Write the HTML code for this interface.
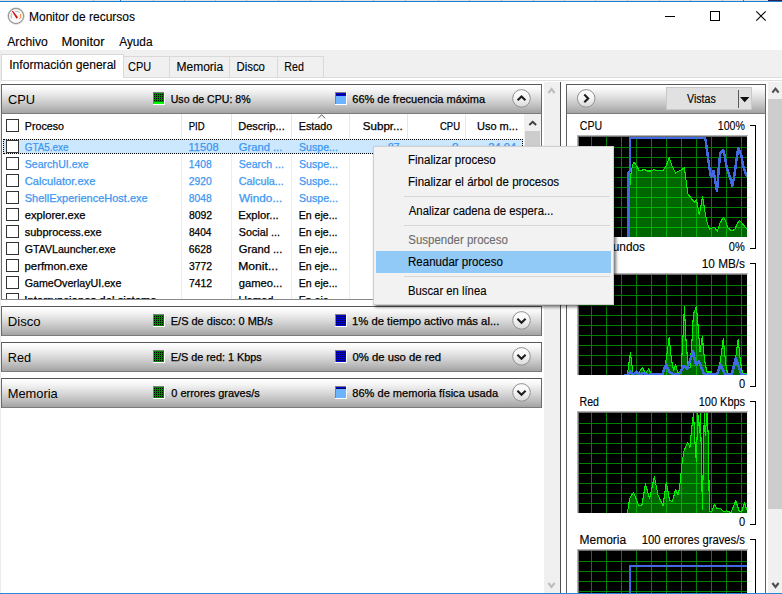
<!DOCTYPE html>
<html lang="es"><head><meta charset="utf-8"><title>Monitor de recursos</title>
<style>
html,body{margin:0;padding:0;background:#fff;}
body{width:782px;height:594px;position:relative;overflow:hidden;font-family:"Liberation Sans",sans-serif;font-size:12px;}
div,i,span,svg{position:absolute;display:block;box-sizing:border-box;}
.t{white-space:pre;line-height:16px;transform-origin:0 0;-webkit-text-stroke:0.25px currentColor;}
.sh{left:1px;width:541px;height:30px;border:1px solid #6a6a6a;border-top-color:#585858;border-bottom-color:#7b7b7b;background:linear-gradient(#ffffff 0%,#f9f9f9 14%,#ebebeb 30%,#d7d7d7 52%,#bcbcbc 78%,#a3a3a3 100%);}
.ck{left:6px;width:13px;height:13px;border:1px solid #333;background:#fff;}
.cl{top:138px;width:1px;height:161px;background:#e6eef8;}
.tab{top:56px;height:21px;border:1px solid #d9d9d9;border-bottom:none;background:#f0f0f0;}
.sep{left:404px;width:206px;height:1px;background:#d7d7d7;}
</style></head><body>
<svg style="left:0;top:0" width="0" height="0"><defs>
<pattern id="pg" width="2" height="2" patternUnits="userSpaceOnUse"><rect width="2" height="2" fill="#008400"/><rect x="1" y="0" width="1" height="1" fill="#000"/></pattern>
<pattern id="pb" width="2" height="2" patternUnits="userSpaceOnUse"><rect width="2" height="2" fill="#0000d8"/><rect x="1" y="0" width="1" height="1" fill="#000060"/></pattern>
</defs></svg>
<!-- window frame -->
<div style="left:0px;top:0px;width:782px;height:1px;background:#e2e2e2;"></div><div style="left:93px;top:0px;width:1px;height:1px;background:#bdbdbd;"></div><div style="left:153px;top:0px;width:1px;height:1px;background:#bdbdbd;"></div><div style="left:184px;top:0px;width:1px;height:1px;background:#bdbdbd;"></div><div style="left:215px;top:0px;width:1px;height:1px;background:#bdbdbd;"></div><div style="left:246px;top:0px;width:1px;height:1px;background:#bdbdbd;"></div><div style="left:278px;top:0px;width:1px;height:1px;background:#bdbdbd;"></div><div style="left:310px;top:0px;width:1px;height:1px;background:#bdbdbd;"></div><div style="left:342px;top:0px;width:1px;height:1px;background:#bdbdbd;"></div><div style="left:373px;top:0px;width:1px;height:1px;background:#bdbdbd;"></div><div style="left:405px;top:0px;width:1px;height:1px;background:#bdbdbd;"></div><div style="left:438px;top:0px;width:1px;height:1px;background:#bdbdbd;"></div><div style="left:469px;top:0px;width:1px;height:1px;background:#bdbdbd;"></div><div style="left:501px;top:0px;width:1px;height:1px;background:#bdbdbd;"></div><div style="left:533px;top:0px;width:1px;height:1px;background:#bdbdbd;"></div><div style="left:564px;top:0px;width:1px;height:1px;background:#bdbdbd;"></div><div style="left:595px;top:0px;width:1px;height:1px;background:#bdbdbd;"></div><div style="left:627px;top:0px;width:1px;height:1px;background:#bdbdbd;"></div><div style="left:659px;top:0px;width:1px;height:1px;background:#bdbdbd;"></div><div style="left:690px;top:0px;width:1px;height:1px;background:#bdbdbd;"></div><div style="left:722px;top:0px;width:1px;height:1px;background:#bdbdbd;"></div><div style="left:120px;top:0px;width:1px;height:1px;background:#1b7fd3;"></div><div style="left:743px;top:0px;width:1px;height:1px;background:#1b7fd3;"></div><div style="left:0px;top:1px;width:782px;height:1px;background:#1b7fd3;"></div><div style="left:768px;top:0px;width:14px;height:1px;background:#2a2350;"></div>
<!-- title icon -->
<svg style="left:7px;top:7px" width="18" height="18" viewBox="7 7 18 18"><circle cx="16" cy="16" r="7.7" fill="#fbfaf8" stroke="#8a8a8a" stroke-width="1.2"/><circle cx="16" cy="16" r="8.3" fill="none" stroke="#c9c9c9" stroke-width="0.6"/><path d="M11.4 18.4 Q10.6 15.6 11.6 13.4" fill="none" stroke="#8fa595" stroke-width="0.9"/><path d="M15.2 11.4 Q18.6 11 19.8 12.6" fill="none" stroke="#9aa89e" stroke-width="0.8"/><path d="M20.6 14 L20.6 17.6 Q20.4 18.6 19.2 18.7" fill="none" stroke="#f08326" stroke-width="1"/><path d="M11.9 11.2 L12.9 10.7 L18 17.2 L16.5 18.8 Z" fill="#d10f17"/></svg>
<!-- window buttons -->
<svg style="left:660px;top:6px" width="112" height="20" viewBox="660 6 112 20" shape-rendering="crispEdges"><rect x="665" y="16" width="10" height="1" fill="#000"/><rect x="710.5" y="11.5" width="9" height="9" fill="none" stroke="#000" stroke-width="1"/><path d="M756.3 11.3 L765.7 20.7 M765.7 11.3 L756.3 20.7" stroke="#000" stroke-width="1.1" shape-rendering="auto"/></svg>
<!-- tab strip -->
<div style="left:0px;top:50px;width:782px;height:27px;background:#f0f0f0;"></div>
<div style="left:0px;top:50px;width:1px;height:544px;background:#ececec;"></div><div style="left:1px;top:77px;width:781px;height:1px;background:#dcdcdc;"></div><div style="left:1px;top:80px;width:781px;height:1px;background:#dfdfdf;"></div><div style="left:1px;top:77px;width:1px;height:4px;background:#d9d9d9;"></div>
<div class="tab" style="left:123px;width:47px"></div>
<div class="tab" style="left:169px;width:61px"></div>
<div class="tab" style="left:229px;width:49px"></div>
<div class="tab" style="left:277px;width:47px"></div>
<div style="left:1px;top:54px;width:123px;height:24px;background:#fff;border:1px solid #d9d9d9;border-bottom:none"></div>
<!-- left pane scrollbar + splitter -->
<div style="left:544px;top:82px;width:16px;height:511px;background:#f0f0f0;"></div><div style="left:560px;top:82px;width:1px;height:511px;background:#4f4f4f;"></div>
<svg style="left:0;top:0" width="782" height="594" viewBox="0 0 782 594"><path d="M548.4 93.0 L551.5 89.0 L554.6 93.0" fill="none" stroke="#bdbdbd" stroke-width="2.1"/></svg><svg style="left:0;top:0" width="782" height="594" viewBox="0 0 782 594"><path d="M548.4 583.0 L551.5 587.0 L554.6 583.0" fill="none" stroke="#bdbdbd" stroke-width="2.1"/></svg>
<!-- table -->
<div style="left:1px;top:114px;width:541px;height:186px;border:1px solid #6e6e6e;border-top:none;border-bottom-color:#8a8a8a;background:#fff"></div>
<div style="left:0;top:0;width:523px;height:299px;overflow:hidden">
<i class="cl" style="left:181px;top:114px;height:24px;background:#e6e6e6"></i><i class="cl" style="left:231px;top:114px;height:24px;background:#e6e6e6"></i><i class="cl" style="left:291px;top:114px;height:24px;background:#e6e6e6"></i><i class="cl" style="left:349px;top:114px;height:24px;background:#e6e6e6"></i><i class="cl" style="left:407px;top:114px;height:24px;background:#e6e6e6"></i><i class="cl" style="left:465px;top:114px;height:24px;background:#e6e6e6"></i><i class="cl" style="left:181px"></i><i class="cl" style="left:231px"></i><i class="cl" style="left:291px"></i><i class="cl" style="left:349px"></i><i class="cl" style="left:407px"></i><i class="cl" style="left:465px"></i>
<div style="left:3px;top:139px;width:520px;height:15px;background:#cce8ff;border:1px dotted #000"></div>
<i class="ck" style="top:119px"></i><i class="ck" style="top:140px"></i><i class="ck" style="top:157px"></i><i class="ck" style="top:174px"></i><i class="ck" style="top:191px"></i><i class="ck" style="top:208px"></i><i class="ck" style="top:225px"></i><i class="ck" style="top:242px"></i><i class="ck" style="top:259px"></i><i class="ck" style="top:276px"></i><i class="ck" style="top:293px"></i>
<span class="t" style="left:24px;top:139px;font-size:10.5px;color:#3d97f2;transform:translateX(0.75px) scaleX(0.939)">GTA5.exe</span><span class="t" style="left:188px;top:139px;font-size:10.5px;color:#3d97f2;transform:translateX(0.5px) scaleX(1.058)">11508</span><span class="t" style="left:238px;top:139px;font-size:10.5px;color:#3d97f2;transform:translateX(0.75px) scaleX(1.067)">Grand ...</span><span class="t" style="left:299px;top:139px;font-size:10.5px;color:#3d97f2;transform:scaleX(1.010)">Suspe...</span><span class="t" style="left:24px;top:156px;font-size:10.5px;color:#3d97f2;transform:translateX(0.75px) scaleX(1.006)">SearchUI.exe</span><span class="t" style="left:188px;top:156px;font-size:10.5px;color:#3d97f2;transform:translateX(0.75px) scaleX(0.978)">1408</span><span class="t" style="left:238px;top:156px;font-size:10.5px;color:#3d97f2;transform:translateX(0.75px) scaleX(1.005)">Search ...</span><span class="t" style="left:299px;top:156px;font-size:10.5px;color:#3d97f2;transform:scaleX(1.010)">Suspe...</span><span class="t" style="left:24px;top:173px;font-size:10.5px;color:#3d97f2;transform:translateX(0.75px) scaleX(1.061)">Calculator.exe</span><span class="t" style="left:188px;top:173px;font-size:10.5px;color:#3d97f2;transform:translateX(0.75px) scaleX(0.983)">2920</span><span class="t" style="left:238px;top:173px;font-size:10.5px;color:#3d97f2;transform:translateX(0.75px) scaleX(1.031)">Calcula...</span><span class="t" style="left:299px;top:173px;font-size:10.5px;color:#3d97f2;transform:scaleX(1.010)">Suspe...</span><span class="t" style="left:24px;top:190px;font-size:10.5px;color:#3d97f2;transform:translateX(0.75px) scaleX(1.048)">ShellExperienceHost.exe</span><span class="t" style="left:188px;top:190px;font-size:10.5px;color:#3d97f2;transform:translateX(0.75px) scaleX(0.983)">8048</span><span class="t" style="left:239px;top:190px;font-size:10.5px;color:#3d97f2;transform:scaleX(1.122)">Windo...</span><span class="t" style="left:299px;top:190px;font-size:10.5px;color:#3d97f2;transform:scaleX(1.010)">Suspe...</span><span class="t" style="left:24px;top:207px;font-size:10.5px;color:#000;transform:translateX(0.75px) scaleX(1.061)">explorer.exe</span><span class="t" style="left:189px;top:207px;font-size:10.5px;color:#000;transform:scaleX(0.991)">8092</span><span class="t" style="left:238px;top:207px;font-size:10.5px;color:#000;transform:translateX(0.25px) scaleX(1.064)">Explor...</span><span class="t" style="left:298px;top:207px;font-size:10.5px;color:#000;transform:translateX(0.75px) scaleX(1.006)">En eje...</span><span class="t" style="left:24px;top:224px;font-size:10.5px;color:#000;transform:translateX(0.75px) scaleX(1.045)">subprocess.exe</span><span class="t" style="left:189px;top:224px;font-size:10.5px;color:#000;transform:scaleX(0.963)">8404</span><span class="t" style="left:238px;top:224px;font-size:10.5px;color:#000;transform:translateX(0.75px) scaleX(1.024)">Social ...</span><span class="t" style="left:298px;top:224px;font-size:10.5px;color:#000;transform:translateX(0.75px) scaleX(1.006)">En eje...</span><span class="t" style="left:24px;top:241px;font-size:10.5px;color:#000;transform:translateX(0.75px) scaleX(1.009)">GTAVLauncher.exe</span><span class="t" style="left:188px;top:241px;font-size:10.5px;color:#000;transform:translateX(0.75px) scaleX(0.984)">6628</span><span class="t" style="left:238px;top:241px;font-size:10.5px;color:#000;transform:translateX(0.75px) scaleX(1.067)">Grand ...</span><span class="t" style="left:298px;top:241px;font-size:10.5px;color:#000;transform:translateX(0.75px) scaleX(1.006)">En eje...</span><span class="t" style="left:24px;top:258px;font-size:10.5px;color:#000;transform:translateX(0.5px) scaleX(1.082)">perfmon.exe</span><span class="t" style="left:189px;top:258px;font-size:10.5px;color:#000;transform:scaleX(0.990)">3772</span><span class="t" style="left:238px;top:258px;font-size:10.5px;color:#000;transform:translateX(0.25px) scaleX(1.156)">Monit...</span><span class="t" style="left:298px;top:258px;font-size:10.5px;color:#000;transform:translateX(0.75px) scaleX(1.006)">En eje...</span><span class="t" style="left:24px;top:275px;font-size:10.5px;color:#000;transform:translateX(0.75px) scaleX(1.016)">GameOverlayUI.exe</span><span class="t" style="left:189px;top:275px;font-size:10.5px;color:#000;transform:scaleX(0.990)">7412</span><span class="t" style="left:238px;top:275px;font-size:10.5px;color:#000;transform:translateX(0.75px) scaleX(1.067)">gameo...</span><span class="t" style="left:298px;top:275px;font-size:10.5px;color:#000;transform:translateX(0.75px) scaleX(1.006)">En eje...</span><span class="t" style="left:24px;top:292px;font-size:10.5px;color:#000;transform:translateX(0.25px) scaleX(1.081)">Interrupciones del sistema</span><span class="t" style="left:238px;top:292px;font-size:10.5px;color:#000;transform:translateX(0.5px) scaleX(1.011)">Llamad...</span><span class="t" style="left:298px;top:292px;font-size:10.5px;color:#000;transform:translateX(0.75px) scaleX(1.006)">En eje...</span><span class="t" style="left:388px;top:139px;font-size:10.5px;color:#3d97f2;transform:scaleX(0.982)">87</span><span class="t" style="left:452px;top:139px;font-size:10.5px;color:#3d97f2;transform:scaleX(1.112)">0</span><span class="t" style="left:488px;top:139px;font-size:10.5px;color:#3d97f2;transform:translateX(0.25px) scaleX(1.064)">24.04</span>
</div>
<div style="left:524px;top:114px;width:17px;height:185px;background:#f0f0f0;"></div><div style="left:525px;top:131px;width:15px;height:150px;background:#cdcdcd;"></div>
<svg style="left:0;top:0" width="782" height="594" viewBox="0 0 782 594"><path d="M529.3 125.0 L532.7 121.7 L536.1 125.0" fill="none" stroke="#404040" stroke-width="1.9"/></svg>
<svg style="left:316px;top:113px" width="12" height="7" viewBox="316 113 12 7"><path d="M318.2 118.3 L321.6 114.7 L325 118.3" fill="none" stroke="#4a4a4a" stroke-width="0.9"/></svg>
<!-- sections -->
<div class="sh" style="top:84px"></div><svg style="left:153px;top:92px" width="12" height="13" viewBox="0 0 12 13" shape-rendering="crispEdges"><rect x="0" y="0" width="12" height="13" fill="#fff"/><rect x="0" y="0" width="11" height="1" fill="#808080"/><rect x="0" y="0" width="1" height="12" fill="#808080"/><rect x="1" y="1" width="10" height="11" fill="url(#pg)"/><rect x="1" y="10" width="10" height="2" fill="#00ff00"/></svg><svg style="left:335px;top:92px" width="12" height="13" viewBox="0 0 12 13" shape-rendering="crispEdges"><rect x="0" y="0" width="12" height="13" fill="#fff"/><rect x="0" y="0" width="11" height="1" fill="#808080"/><rect x="0" y="0" width="1" height="12" fill="#808080"/><rect x="1" y="1" width="10" height="11" fill="#6cb4ff"/><rect x="1" y="1" width="10" height="3" fill="url(#pb)"/></svg><svg style="left:511px;top:88px" width="21" height="21" viewBox="0 0 21 21"><defs><linearGradient id="cg84" x1="0" y1="0" x2="0" y2="1"><stop offset="0" stop-color="#ffffff"/><stop offset="0.5" stop-color="#f4f4f4"/><stop offset="1" stop-color="#d8d8d8"/></linearGradient></defs><g transform="translate(10.50 10.40)"><circle cx="0" cy="0" r="8.8" fill="url(#cg84)" stroke="#909090" stroke-width="1"/><path d="M-3.9 1.9 L0 -2 L3.9 1.9" fill="none" stroke="#1e1e1e" stroke-width="2.1"/></g></svg>
<div class="sh" style="top:306px"></div><svg style="left:153px;top:314px" width="12" height="13" viewBox="0 0 12 13" shape-rendering="crispEdges"><rect x="0" y="0" width="12" height="13" fill="#fff"/><rect x="0" y="0" width="11" height="1" fill="#808080"/><rect x="0" y="0" width="1" height="12" fill="#808080"/><rect x="1" y="1" width="10" height="11" fill="url(#pg)"/></svg><svg style="left:335px;top:314px" width="12" height="13" viewBox="0 0 12 13" shape-rendering="crispEdges"><rect x="0" y="0" width="12" height="13" fill="#fff"/><rect x="0" y="0" width="11" height="1" fill="#808080"/><rect x="0" y="0" width="1" height="12" fill="#808080"/><rect x="1" y="1" width="10" height="11" fill="#6cb4ff"/><rect x="1" y="1" width="10" height="11" fill="url(#pb)"/></svg><svg style="left:511px;top:310px" width="21" height="21" viewBox="0 0 21 21"><defs><linearGradient id="cg306" x1="0" y1="0" x2="0" y2="1"><stop offset="0" stop-color="#ffffff"/><stop offset="0.5" stop-color="#f4f4f4"/><stop offset="1" stop-color="#d8d8d8"/></linearGradient></defs><g transform="translate(10.50 10.40)"><circle cx="0" cy="0" r="8.8" fill="url(#cg306)" stroke="#909090" stroke-width="1"/><path d="M-4.1 -1.7 L0 2.3 L4.1 -1.7" fill="none" stroke="#1e1e1e" stroke-width="2.1"/></g></svg>
<div class="sh" style="top:342px"></div><svg style="left:153px;top:350px" width="12" height="13" viewBox="0 0 12 13" shape-rendering="crispEdges"><rect x="0" y="0" width="12" height="13" fill="#fff"/><rect x="0" y="0" width="11" height="1" fill="#808080"/><rect x="0" y="0" width="1" height="12" fill="#808080"/><rect x="1" y="1" width="10" height="11" fill="url(#pg)"/></svg><svg style="left:335px;top:350px" width="12" height="13" viewBox="0 0 12 13" shape-rendering="crispEdges"><rect x="0" y="0" width="12" height="13" fill="#fff"/><rect x="0" y="0" width="11" height="1" fill="#808080"/><rect x="0" y="0" width="1" height="12" fill="#808080"/><rect x="1" y="1" width="10" height="11" fill="#6cb4ff"/><rect x="1" y="1" width="10" height="11" fill="url(#pb)"/></svg><svg style="left:511px;top:346px" width="21" height="21" viewBox="0 0 21 21"><defs><linearGradient id="cg342" x1="0" y1="0" x2="0" y2="1"><stop offset="0" stop-color="#ffffff"/><stop offset="0.5" stop-color="#f4f4f4"/><stop offset="1" stop-color="#d8d8d8"/></linearGradient></defs><g transform="translate(10.50 10.40)"><circle cx="0" cy="0" r="8.8" fill="url(#cg342)" stroke="#909090" stroke-width="1"/><path d="M-4.1 -1.7 L0 2.3 L4.1 -1.7" fill="none" stroke="#1e1e1e" stroke-width="2.1"/></g></svg>
<div class="sh" style="top:378px"></div><svg style="left:153px;top:386px" width="12" height="13" viewBox="0 0 12 13" shape-rendering="crispEdges"><rect x="0" y="0" width="12" height="13" fill="#fff"/><rect x="0" y="0" width="11" height="1" fill="#808080"/><rect x="0" y="0" width="1" height="12" fill="#808080"/><rect x="1" y="1" width="10" height="11" fill="url(#pg)"/></svg><svg style="left:335px;top:386px" width="12" height="13" viewBox="0 0 12 13" shape-rendering="crispEdges"><rect x="0" y="0" width="12" height="13" fill="#fff"/><rect x="0" y="0" width="11" height="1" fill="#808080"/><rect x="0" y="0" width="1" height="12" fill="#808080"/><rect x="1" y="1" width="10" height="11" fill="#6cb4ff"/><rect x="1" y="1" width="10" height="2" fill="url(#pb)"/></svg><svg style="left:511px;top:382px" width="21" height="21" viewBox="0 0 21 21"><defs><linearGradient id="cg378" x1="0" y1="0" x2="0" y2="1"><stop offset="0" stop-color="#ffffff"/><stop offset="0.5" stop-color="#f4f4f4"/><stop offset="1" stop-color="#d8d8d8"/></linearGradient></defs><g transform="translate(10.50 10.40)"><circle cx="0" cy="0" r="8.8" fill="url(#cg378)" stroke="#909090" stroke-width="1"/><path d="M-4.1 -1.7 L0 2.3 L4.1 -1.7" fill="none" stroke="#1e1e1e" stroke-width="2.1"/></g></svg>
<!-- right panel -->
<div style="left:566px;top:84px;width:200px;height:520px;border:1px solid #5f5f5f;background:#fff"></div>
<div style="left:566px;top:84px;width:200px;height:30px;border:1px solid #5f5f5f;border-top-color:#585858;border-bottom-color:#7b7b7b;background:linear-gradient(#ffffff 0%,#f9f9f9 14%,#ebebeb 30%,#d7d7d7 52%,#bcbcbc 78%,#a3a3a3 100%)"></div>
<svg style="left:576px;top:88px" width="21" height="21" viewBox="0 0 21 21"><defs><linearGradient id="cgr" x1="0" y1="0" x2="0" y2="1"><stop offset="0" stop-color="#ffffff"/><stop offset="0.5" stop-color="#f4f4f4"/><stop offset="1" stop-color="#d8d8d8"/></linearGradient></defs><g transform="translate(10.20 10.40)"><circle cx="0" cy="0" r="8.8" fill="url(#cgr)" stroke="#909090" stroke-width="1"/><path d="M-1.9 -3.9 L2 0 L-1.9 3.9" fill="none" stroke="#1e1e1e" stroke-width="2.1"/></g></svg>
<div style="left:666px;top:87px;width:86px;height:23px;background:#e1e1e1;border:1px solid #c9c9c9"></div>
<div style="left:738px;top:90px;width:1px;height:18px;background:#5a5a5a;"></div>
<svg style="left:739px;top:96px" width="12" height="8" viewBox="739 96 12 8"><path d="M740 97 L749.4 97 L744.7 102.2 Z" fill="#111"/></svg>
<!-- right scrollbar -->
<div style="left:768px;top:82px;width:14px;height:511px;background:#f0f0f0;"></div><div style="left:768px;top:99px;width:14px;height:410px;background:#cdcdcd;"></div>
<svg style="left:0;top:0" width="782" height="594" viewBox="0 0 782 594"><path d="M772.4 92.7 L775.5 88.7 L778.6 92.7" fill="none" stroke="#505050" stroke-width="2.1"/></svg><svg style="left:0;top:0" width="782" height="594" viewBox="0 0 782 594"><path d="M772.4 583.0 L775.5 587.0 L778.6 583.0" fill="none" stroke="#505050" stroke-width="2.1"/></svg>
<svg class="gsvg" width="782" height="594" viewBox="0 0 782 594"><defs><clipPath id="c0"><rect x="579" y="137" width="168" height="100"/></clipPath><clipPath id="c1"><rect x="579" y="275" width="168" height="100"/></clipPath><clipPath id="c2"><rect x="579" y="413" width="168" height="100"/></clipPath><clipPath id="c3"><rect x="579" y="551" width="168" height="42"/></clipPath></defs><rect x="577" y="135" width="170" height="102" fill="#000"/><rect x="577" y="135" width="171" height="1" fill="#b4b4b4"/><rect x="577" y="136" width="170" height="1" fill="#6e6e6e"/><rect x="577" y="135" width="1" height="102" fill="#b4b4b4"/><rect x="578" y="136" width="1" height="101" fill="#6e6e6e"/><rect x="747" y="136" width="1" height="101" fill="#f4f4f4"/><g clip-path="url(#c0)"><g shape-rendering="crispEdges"><rect x="591" y="137" width="1" height="100" fill="#008000"/><rect x="606" y="137" width="1" height="100" fill="#008000"/><rect x="621" y="137" width="1" height="100" fill="#008000"/><rect x="636" y="137" width="1" height="100" fill="#008000"/><rect x="651" y="137" width="1" height="100" fill="#008000"/><rect x="666" y="137" width="1" height="100" fill="#008000"/><rect x="681" y="137" width="1" height="100" fill="#008000"/><rect x="696" y="137" width="1" height="100" fill="#008000"/><rect x="711" y="137" width="1" height="100" fill="#008000"/><rect x="726" y="137" width="1" height="100" fill="#008000"/><rect x="741" y="137" width="1" height="100" fill="#008000"/><rect x="579" y="147" width="168" height="1" fill="#008000"/><rect x="579" y="157" width="168" height="1" fill="#008000"/><rect x="579" y="167" width="168" height="1" fill="#008000"/><rect x="579" y="177" width="168" height="1" fill="#008000"/><rect x="579" y="187" width="168" height="1" fill="#008000"/><rect x="579" y="197" width="168" height="1" fill="#008000"/><rect x="579" y="207" width="168" height="1" fill="#008000"/><rect x="579" y="217" width="168" height="1" fill="#008000"/><rect x="579" y="227" width="168" height="1" fill="#008000"/></g><polygon points="629.5,238 629.5,237.0 630.0,181.0 631.5,170.0 633.5,162.2 635.5,164.0 637.0,166.5 639.0,170.5 641.0,170.3 644.5,169.5 647.0,171.0 651.0,171.0 654.0,169.5 657.0,171.0 660.0,170.5 663.0,170.5 666.0,166.0 669.3,157.8 672.0,166.0 675.5,173.0 679.0,171.0 682.0,169.5 684.4,167.5 686.0,180.0 688.0,194.0 691.0,198.0 694.3,202.5 696.5,200.0 699.3,215.0 702.6,196.4 705.0,212.0 707.0,222.0 709.5,229.0 712.0,228.0 714.0,227.0 717.4,231.0 720.0,223.0 723.5,217.2 726.0,222.0 728.0,228.0 732.0,231.0 735.0,229.0 737.0,224.0 739.4,220.5 742.0,223.0 745.0,227.0 747.0,229.0 747.0,238" fill="#00ff00" fill-opacity="0.4"/><polyline points="629.5,237.0 630.0,181.0 631.5,170.0 633.5,162.2 635.5,164.0 637.0,166.5 639.0,170.5 641.0,170.3 644.5,169.5 647.0,171.0 651.0,171.0 654.0,169.5 657.0,171.0 660.0,170.5 663.0,170.5 666.0,166.0 669.3,157.8 672.0,166.0 675.5,173.0 679.0,171.0 682.0,169.5 684.4,167.5 686.0,180.0 688.0,194.0 691.0,198.0 694.3,202.5 696.5,200.0 699.3,215.0 702.6,196.4 705.0,212.0 707.0,222.0 709.5,229.0 712.0,228.0 714.0,227.0 717.4,231.0 720.0,223.0 723.5,217.2 726.0,222.0 728.0,228.0 732.0,231.0 735.0,229.0 737.0,224.0 739.4,220.5 742.0,223.0 745.0,227.0 747.0,229.0" fill="none" stroke="#00f000" stroke-width="1.1" stroke-linejoin="round" shape-rendering="crispEdges"/><polyline points="628.5,237.5 628.5,173.0 630.0,171.0 630.0,138.0 704.5,138.0 705.6,140.0 707.2,152.0 709.0,165.0 711.0,177.0 713.6,171.0 717.0,191.0 719.0,165.0 720.3,153.5 723.3,150.0 725.0,157.0 727.0,169.0 730.0,177.0 732.2,186.0 734.0,178.0 736.0,163.0 738.3,148.0 741.5,156.0 743.0,165.0 745.0,172.0 747.0,176.5" fill="none" stroke="#4169e1" stroke-width="2.5" stroke-linejoin="round" shape-rendering="crispEdges"/></g><rect x="577" y="273" width="170" height="102" fill="#000"/><rect x="577" y="273" width="171" height="1" fill="#b4b4b4"/><rect x="577" y="274" width="170" height="1" fill="#6e6e6e"/><rect x="577" y="273" width="1" height="102" fill="#b4b4b4"/><rect x="578" y="274" width="1" height="101" fill="#6e6e6e"/><rect x="747" y="274" width="1" height="101" fill="#f4f4f4"/><g clip-path="url(#c1)"><g shape-rendering="crispEdges"><rect x="591" y="275" width="1" height="100" fill="#008000"/><rect x="606" y="275" width="1" height="100" fill="#008000"/><rect x="621" y="275" width="1" height="100" fill="#008000"/><rect x="636" y="275" width="1" height="100" fill="#008000"/><rect x="651" y="275" width="1" height="100" fill="#008000"/><rect x="666" y="275" width="1" height="100" fill="#008000"/><rect x="681" y="275" width="1" height="100" fill="#008000"/><rect x="696" y="275" width="1" height="100" fill="#008000"/><rect x="711" y="275" width="1" height="100" fill="#008000"/><rect x="726" y="275" width="1" height="100" fill="#008000"/><rect x="741" y="275" width="1" height="100" fill="#008000"/><rect x="579" y="285" width="168" height="1" fill="#008000"/><rect x="579" y="295" width="168" height="1" fill="#008000"/><rect x="579" y="305" width="168" height="1" fill="#008000"/><rect x="579" y="315" width="168" height="1" fill="#008000"/><rect x="579" y="325" width="168" height="1" fill="#008000"/><rect x="579" y="335" width="168" height="1" fill="#008000"/><rect x="579" y="345" width="168" height="1" fill="#008000"/><rect x="579" y="355" width="168" height="1" fill="#008000"/><rect x="579" y="365" width="168" height="1" fill="#008000"/></g><polygon points="624.0,376 624.0,375.0 627.5,374.0 630.4,352.5 633.0,373.0 638.0,374.0 642.4,367.6 645.5,373.0 648.6,369.0 651.5,374.0 660.0,374.5 664.0,372.0 666.5,357.0 669.2,337.5 671.5,360.0 673.7,371.0 675.5,365.0 678.0,373.0 681.0,371.0 682.8,340.0 684.4,307.0 686.0,340.0 688.0,366.0 690.0,368.0 692.0,340.0 693.4,314.0 696.4,306.5 698.0,325.0 700.0,352.0 702.3,336.3 704.5,360.0 707.0,372.0 711.3,372.0 713.5,374.5 717.6,374.0 720.5,360.0 723.3,338.4 725.5,362.0 727.4,373.0 732.0,373.5 735.0,362.0 738.2,339.5 740.5,362.0 742.6,373.5 744.4,374.0 747.0,374.0 747.0,376" fill="#00ff00" fill-opacity="0.4"/><polyline points="624.0,375.0 627.5,374.0 630.4,352.5 633.0,373.0 638.0,374.0 642.4,367.6 645.5,373.0 648.6,369.0 651.5,374.0 660.0,374.5 664.0,372.0 666.5,357.0 669.2,337.5 671.5,360.0 673.7,371.0 675.5,365.0 678.0,373.0 681.0,371.0 682.8,340.0 684.4,307.0 686.0,340.0 688.0,366.0 690.0,368.0 692.0,340.0 693.4,314.0 696.4,306.5 698.0,325.0 700.0,352.0 702.3,336.3 704.5,360.0 707.0,372.0 711.3,372.0 713.5,374.5 717.6,374.0 720.5,360.0 723.3,338.4 725.5,362.0 727.4,373.0 732.0,373.5 735.0,362.0 738.2,339.5 740.5,362.0 742.6,373.5 744.4,374.0 747.0,374.0" fill="none" stroke="#00f000" stroke-width="1.1" stroke-linejoin="round" shape-rendering="crispEdges"/><polyline points="624.0,375.4 628.0,374.9 630.4,371.2 633.0,374.9 636.5,371.7 639.0,374.9 644.0,372.9 648.0,374.9 656.7,374.2 662.0,374.9 666.2,363.9 669.0,371.9 673.7,374.2 679.0,374.4 683.5,365.9 687.0,368.9 690.5,358.9 693.0,351.1 696.0,364.9 698.8,361.3 701.5,367.9 704.0,373.9 716.7,374.9 720.6,364.6 724.7,373.9 732.0,373.9 735.8,358.3 738.0,364.9 740.0,370.3 741.7,374.9 747.0,375.2" fill="none" stroke="#4169e1" stroke-width="2.6" stroke-linejoin="round" shape-rendering="crispEdges"/></g><rect x="577" y="411" width="170" height="102" fill="#000"/><rect x="577" y="411" width="171" height="1" fill="#b4b4b4"/><rect x="577" y="412" width="170" height="1" fill="#6e6e6e"/><rect x="577" y="411" width="1" height="102" fill="#b4b4b4"/><rect x="578" y="412" width="1" height="101" fill="#6e6e6e"/><rect x="747" y="412" width="1" height="101" fill="#f4f4f4"/><g clip-path="url(#c2)"><g shape-rendering="crispEdges"><rect x="591" y="413" width="1" height="100" fill="#008000"/><rect x="606" y="413" width="1" height="100" fill="#008000"/><rect x="621" y="413" width="1" height="100" fill="#008000"/><rect x="636" y="413" width="1" height="100" fill="#008000"/><rect x="651" y="413" width="1" height="100" fill="#008000"/><rect x="666" y="413" width="1" height="100" fill="#008000"/><rect x="681" y="413" width="1" height="100" fill="#008000"/><rect x="696" y="413" width="1" height="100" fill="#008000"/><rect x="711" y="413" width="1" height="100" fill="#008000"/><rect x="726" y="413" width="1" height="100" fill="#008000"/><rect x="741" y="413" width="1" height="100" fill="#008000"/><rect x="579" y="423" width="168" height="1" fill="#008000"/><rect x="579" y="433" width="168" height="1" fill="#008000"/><rect x="579" y="443" width="168" height="1" fill="#008000"/><rect x="579" y="453" width="168" height="1" fill="#008000"/><rect x="579" y="463" width="168" height="1" fill="#008000"/><rect x="579" y="473" width="168" height="1" fill="#008000"/><rect x="579" y="483" width="168" height="1" fill="#008000"/><rect x="579" y="493" width="168" height="1" fill="#008000"/><rect x="579" y="503" width="168" height="1" fill="#008000"/></g><polygon points="627.4,514 627.4,513.0 629.6,498.7 633.3,492.3 635.7,497.8 638.5,505.2 641.9,505.2 645.4,483.9 649.6,498.7 654.3,476.5 658.0,495.0 663.0,505.8 666.3,482.0 669.6,500.6 672.4,501.5 675.6,489.5 678.3,495.0 680.2,482.0 682.0,463.6 683.9,451.5 687.6,442.3 690.0,447.3 691.3,432.0 693.5,413.0 695.0,443.0 696.3,461.7 697.8,413.0 699.6,432.0 700.5,413.0 702.4,509.0 704.3,413.0 705.2,435.8 707.0,413.0 708.5,439.5 709.3,511.7 711.7,511.7 714.4,504.3 717.2,509.0 720.0,508.0 723.7,511.7 726.5,510.8 731.0,512.6 735.7,500.6 739.4,511.7 742.2,510.8 744.4,502.4 746.9,510.0 746.9,514" fill="#00ff00" fill-opacity="0.4"/><polyline points="627.4,513.0 629.6,498.7 633.3,492.3 635.7,497.8 638.5,505.2 641.9,505.2 645.4,483.9 649.6,498.7 654.3,476.5 658.0,495.0 663.0,505.8 666.3,482.0 669.6,500.6 672.4,501.5 675.6,489.5 678.3,495.0 680.2,482.0 682.0,463.6 683.9,451.5 687.6,442.3 690.0,447.3 691.3,432.0 693.5,413.0 695.0,443.0 696.3,461.7 697.8,413.0 699.6,432.0 700.5,413.0 702.4,509.0 704.3,413.0 705.2,435.8 707.0,413.0 708.5,439.5 709.3,511.7 711.7,511.7 714.4,504.3 717.2,509.0 720.0,508.0 723.7,511.7 726.5,510.8 731.0,512.6 735.7,500.6 739.4,511.7 742.2,510.8 744.4,502.4 746.9,510.0" fill="none" stroke="#00f000" stroke-width="1.1" stroke-linejoin="round" shape-rendering="crispEdges"/></g><rect x="577" y="549" width="170" height="44" fill="#000"/><rect x="577" y="549" width="171" height="1" fill="#b4b4b4"/><rect x="577" y="550" width="170" height="1" fill="#6e6e6e"/><rect x="577" y="549" width="1" height="44" fill="#b4b4b4"/><rect x="578" y="550" width="1" height="43" fill="#6e6e6e"/><rect x="747" y="550" width="1" height="43" fill="#f4f4f4"/><g clip-path="url(#c3)"><g shape-rendering="crispEdges"><rect x="591" y="551" width="1" height="42" fill="#008000"/><rect x="606" y="551" width="1" height="42" fill="#008000"/><rect x="621" y="551" width="1" height="42" fill="#008000"/><rect x="636" y="551" width="1" height="42" fill="#008000"/><rect x="651" y="551" width="1" height="42" fill="#008000"/><rect x="666" y="551" width="1" height="42" fill="#008000"/><rect x="681" y="551" width="1" height="42" fill="#008000"/><rect x="696" y="551" width="1" height="42" fill="#008000"/><rect x="711" y="551" width="1" height="42" fill="#008000"/><rect x="726" y="551" width="1" height="42" fill="#008000"/><rect x="741" y="551" width="1" height="42" fill="#008000"/><rect x="579" y="561" width="168" height="1" fill="#008000"/><rect x="579" y="571" width="168" height="1" fill="#008000"/><rect x="579" y="581" width="168" height="1" fill="#008000"/><rect x="579" y="591" width="168" height="1" fill="#008000"/></g><polyline points="630.0,600.0 630.0,566.0 747.0,566.0" fill="none" stroke="#4169e1" stroke-width="2" stroke-linejoin="round" shape-rendering="crispEdges"/></g><g shape-rendering="crispEdges" fill="#000"><rect x="750" y="125" width="6" height="1"/><rect x="755" y="125" width="1" height="124"/><rect x="750" y="248" width="6" height="1"/></g><g shape-rendering="crispEdges" fill="#000"><rect x="750" y="263" width="6" height="1"/><rect x="755" y="263" width="1" height="124"/><rect x="750" y="386" width="6" height="1"/></g><g shape-rendering="crispEdges" fill="#000"><rect x="750" y="401" width="6" height="1"/><rect x="755" y="401" width="1" height="124"/><rect x="750" y="524" width="6" height="1"/></g><g shape-rendering="crispEdges" fill="#000"><rect x="750" y="539" width="6" height="1"/><rect x="755" y="539" width="1" height="62"/><rect x="750" y="600" width="6" height="1"/></g></svg>
<span class="t" style="left:29px;top:9px;font-size:12px;color:#000;-webkit-text-stroke-width:0.12px">Monitor de recursos</span><span class="t" style="left:7px;top:34px;font-size:12px;color:#000;-webkit-text-stroke-width:0.12px;transform:translateX(0.25px) scaleX(1.014)">Archivo</span><span class="t" style="left:61px;top:34px;font-size:12px;color:#000;-webkit-text-stroke-width:0.12px;transform:translateX(0.5px) scaleX(1.076)">Monitor</span><span class="t" style="left:119px;top:34px;font-size:12px;color:#000;-webkit-text-stroke-width:0.12px;transform:translateX(0.25px) scaleX(0.983)">Ayuda</span><span class="t" style="left:9px;top:57px;font-size:12px;color:#000;-webkit-text-stroke-width:0.12px;transform:translateX(0.25px) scaleX(1.007)">Información general</span><span class="t" style="left:128px;top:59px;font-size:12px;color:#000;-webkit-text-stroke-width:0.12px;transform:scaleX(0.912)">CPU</span><span class="t" style="left:176px;top:59px;font-size:12px;color:#000;-webkit-text-stroke-width:0.12px;transform:translateX(0.5px)">Memoria</span><span class="t" style="left:236px;top:59px;font-size:12px;color:#000;-webkit-text-stroke-width:0.12px;transform:translateX(0.5px) scaleX(0.948)">Disco</span><span class="t" style="left:284px;top:59px;font-size:12px;color:#000;-webkit-text-stroke-width:0.12px;transform:translateX(0.25px) scaleX(0.889)">Red</span><span class="t" style="left:8px;top:92px;font-size:13.4px;color:#000;-webkit-text-stroke:0;transform:scaleX(0.958)">CPU</span><span class="t" style="left:7px;top:314px;font-size:13.4px;color:#000;-webkit-text-stroke:0;transform:translateX(0.75px) scaleX(0.982)">Disco</span><span class="t" style="left:7px;top:350px;font-size:13.4px;color:#000;-webkit-text-stroke:0;transform:translateX(0.75px) scaleX(0.945)">Red</span><span class="t" style="left:7px;top:386px;font-size:13.4px;color:#000;-webkit-text-stroke:0;transform:translateX(0.75px) scaleX(0.960)">Memoria</span><span class="t" style="left:170px;top:91px;font-size:10.5px;color:#000;transform:translateX(0.75px) scaleX(1.005)">Uso de CPU: 8%</span><span class="t" style="left:352px;top:91px;font-size:10.5px;color:#000;transform:translateX(0.25px) scaleX(1.049)">66% de frecuencia máxima</span><span class="t" style="left:170px;top:313px;font-size:10.5px;color:#000;transform:translateX(0.75px) scaleX(1.046)">E/S de disco: 0 MB/s</span><span class="t" style="left:352px;top:313px;font-size:10.5px;color:#000;transform:scaleX(1.074)">1% de tiempo activo más al...</span><span class="t" style="left:170px;top:349px;font-size:10.5px;color:#000;transform:translateX(0.75px) scaleX(1.031)">E/S de red: 1 Kbps</span><span class="t" style="left:352px;top:349px;font-size:10.5px;color:#000;transform:translateX(0.5px) scaleX(1.076)">0% de uso de red</span><span class="t" style="left:171px;top:385px;font-size:10.5px;color:#000;transform:translateX(0.25px) scaleX(1.045)">0 errores graves/s</span><span class="t" style="left:352px;top:385px;font-size:10.5px;color:#000;transform:translateX(0.25px) scaleX(1.054)">86% de memoria física usada</span><span class="t" style="left:24px;top:118px;font-size:11px;color:#000;transform:translateX(0.75px) scaleX(0.972)">Proceso</span><span class="t" style="left:188px;top:118px;font-size:11px;color:#000;transform:translateX(0.75px) scaleX(0.867)">PID</span><span class="t" style="left:238px;top:118px;font-size:11px;color:#000;transform:translateX(0.25px)">Descrip...</span><span class="t" style="left:298px;top:118px;font-size:11px;color:#000;transform:translateX(0.75px) scaleX(0.981)">Estado</span><span class="t" style="left:362px;top:118px;font-size:11px;color:#000;transform:translateX(0.75px) scaleX(1.055)">Subpr...</span><span class="t" style="left:440px;top:118px;font-size:11px;color:#000;transform:scaleX(0.861)">CPU</span><span class="t" style="left:477px;top:118px;font-size:11px;color:#000">Uso m...</span><span class="t" style="left:687px;top:91px;font-size:12px;color:#000;-webkit-text-stroke-width:0.12px;transform:scaleX(0.884)">Vistas</span><span class="t" style="left:579px;top:118px;font-size:12px;color:#000;-webkit-text-stroke-width:0.12px;transform:translateX(0.75px) scaleX(0.883)">CPU</span><span class="t" style="left:717px;top:118px;font-size:12px;color:#000;-webkit-text-stroke-width:0.12px;transform:translateX(0.75px) scaleX(0.881)">100%</span><span class="t" style="left:577px;top:239px;font-size:12px;color:#000;-webkit-text-stroke-width:0.12px;transform:translateX(0.25px) scaleX(0.985)">60 segundos</span><span class="t" style="left:728px;top:239px;font-size:12px;color:#000;-webkit-text-stroke-width:0.12px;transform:translateX(0.75px) scaleX(0.920)">0%</span><span class="t" style="left:701px;top:256px;font-size:12px;color:#000;-webkit-text-stroke-width:0.12px;transform:translateX(0.75px) scaleX(0.982)">10 MB/s</span><span class="t" style="left:739px;top:376px;font-size:12px;color:#000;-webkit-text-stroke-width:0.12px;transform:scaleX(0.923)">0</span><span class="t" style="left:579px;top:394px;font-size:12px;color:#000;-webkit-text-stroke-width:0.12px;transform:translateX(0.5px) scaleX(0.883)">Red</span><span class="t" style="left:698px;top:394px;font-size:12px;color:#000;-webkit-text-stroke-width:0.12px;transform:translateX(0.75px) scaleX(0.914)">100 Kbps</span><span class="t" style="left:739px;top:514px;font-size:12px;color:#000;-webkit-text-stroke-width:0.12px;transform:scaleX(0.923)">0</span><span class="t" style="left:579px;top:532px;font-size:12px;color:#000;-webkit-text-stroke-width:0.12px;transform:translateX(0.5px)">Memoria</span><span class="t" style="left:641px;top:532px;font-size:12px;color:#000;-webkit-text-stroke-width:0.12px;transform:translateX(0.75px) scaleX(0.938)">100 errores graves/s</span>
<!-- context menu -->
<div style="left:373px;top:146px;width:241px;height:159px;background:#f2f2f2;border:1px solid #cfcfcf;box-shadow:2px 2px 3px rgba(0,0,0,0.55)"></div>
<div style="left:376px;top:251px;width:235px;height:22px;background:#91c9f7;"></div>
<div class="sep" style="top:196px"></div><div class="sep" style="top:225px"></div><div class="sep" style="top:276px"></div>
<span class="t" style="left:408px;top:152px;font-size:12px;color:#000;-webkit-text-stroke-width:0.12px;transform:scaleX(0.960)">Finalizar proceso</span><span class="t" style="left:408px;top:174px;font-size:12px;color:#000;-webkit-text-stroke-width:0.12px;transform:scaleX(0.964)">Finalizar el árbol de procesos</span><span class="t" style="left:408px;top:203px;font-size:12px;color:#000;-webkit-text-stroke-width:0.12px;transform:translateX(0.75px) scaleX(0.947)">Analizar cadena de espera...</span><span class="t" style="left:408px;top:232px;font-size:12px;color:#6d6d6d;-webkit-text-stroke-width:0.12px;transform:translateX(0.25px) scaleX(0.957)">Suspender proceso</span><span class="t" style="left:408px;top:254px;font-size:12px;color:#000;-webkit-text-stroke-width:0.12px;transform:scaleX(0.961)">Reanudar proceso</span><span class="t" style="left:408px;top:283px;font-size:12px;color:#000;-webkit-text-stroke-width:0.12px;transform:scaleX(0.941)">Buscar en línea</span>
<div style="left:0px;top:593px;width:782px;height:1px;background:#2a86d6;"></div>
</body></html>
